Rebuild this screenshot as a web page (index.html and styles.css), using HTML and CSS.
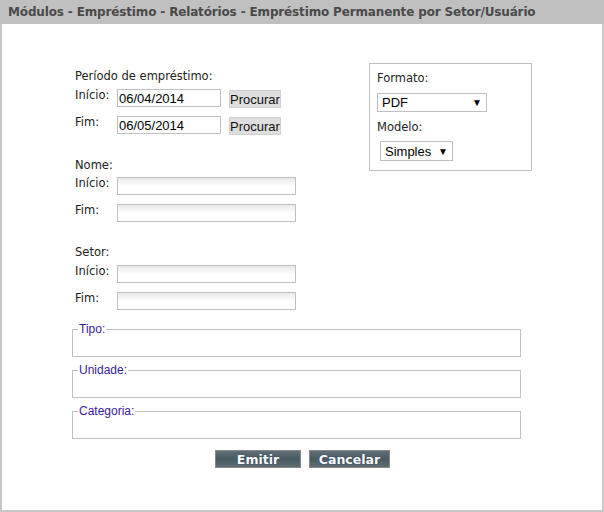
FILE: index.html
```html
<!DOCTYPE html>
<html lang="pt-BR">
    <head>
        <meta charset="UTF-8" />
        <title>Empréstimo Permanente por Setor/Usuário</title>
        <link rel="stylesheet" href="styles.css">
    </head>
    <body>
        <div class="frame">
            <div class="header">Módulos - Empréstimo - Relatórios - Empréstimo Permanente por Setor/Usuário</div>
            <div class="content">
                <div class="top">
                    <div class="filters">
                        <div class="group-title">Período de empréstimo:</div>
                        <div class="row">
                            <label>Início:</label>
                            <input type="text" class="date" value="06/04/2014" />
                            <button class="find">Procurar</button>
                        </div>
                        <div class="row">
                            <label>Fim:</label>
                            <input type="text" class="date" value="06/05/2014" />
                            <button class="find">Procurar</button>
                        </div>

                        <div class="group-title spaced">Nome:</div>
                        <div class="row">
                            <label>Início:</label>
                            <input type="text" class="text" />
                        </div>
                        <div class="row">
                            <label>Fim:</label>
                            <input type="text" class="text" />
                        </div>

                        <div class="group-title spaced-lg">Setor:</div>
                        <div class="row">
                            <label>Início:</label>
                            <input type="text" class="text" />
                        </div>
                        <div class="row">
                            <label>Fim:</label>
                            <input type="text" class="text" />
                        </div>
                    </div>
                    <div class="options">
                        <div class="opt-label">Formato:</div>
                        <div class="select select-wide"><span>PDF</span><span class="arrow">▼</span></div>
                        <div class="opt-label">Modelo:</div>
                        <div class="select select-small"><span>Simples</span><span class="arrow">▼</span></div>
                    </div>
                </div>

                <fieldset><legend>Tipo:</legend></fieldset>
                <fieldset><legend>Unidade:</legend></fieldset>
                <fieldset><legend>Categoria:</legend></fieldset>

                <div class="actions">
                    <button class="action btn-emitir">Emitir</button>
                    <button class="action btn-cancelar">Cancelar</button>
                </div>
            </div>
        </div>
    </body>
</html>
```

FILE: styles.css
```css
body {
    margin: 0;
    font-family: 'DejaVu Sans', Verdana, sans-serif;
    font-size: 11.5px;
    color: #222;
}
.frame {
    width: 604px;
    height: 512px;
    box-sizing: border-box;
    border: 2px solid #c8c8c8;
    border-top: none;
}
.header {
    height: 24px;
    line-height: 25px;
    margin: 0 -2px 0 -2px;
    padding-left: 8px;
    background-color: #c0c0c0;
    color: #4a4a4a;
    font-family: 'DejaVu Sans', Verdana, sans-serif;
    font-weight: bold;
    font-size: 12px;
    letter-spacing: -0.15px;
}
.content {
    padding-top: 39px;
}
.top {
    display: flex;
    align-items: flex-start;
}
.filters {
    width: 294px;
    padding-left: 73px;
    padding-top: 7px;
}
.group-title {
    line-height: 13px;
    margin-bottom: 6px;
}
.group-title.spaced {
    margin-top: 25px;
    margin-bottom: 5px;
}
.group-title.spaced-lg {
    margin-top: 24px;
}
.row {
    display: flex;
    align-items: flex-start;
    height: 18px;
    margin-bottom: 9px;
}
.row label {
    width: 42px;
    line-height: 13px;
}
input {
    height: 18px;
    box-sizing: border-box;
    border: 1px solid #c0c0c0;
    margin: 0;
    padding: 0 1px;
    font-family: 'Liberation Sans', Arial, sans-serif;
    font-size: 13px;
    color: #000;
}
input.date {
    width: 104px;
}
input.text {
    width: 179px;
    background: linear-gradient(#e8e8e8, #ffffff 50%);
}
button.find {
    margin: 1px 0 0 8px;
    height: 18px;
    width: 52px;
    padding: 0;
    border: 1px solid #d0d0d0;
    background-color: #dedede;
    font-family: 'Liberation Sans', Arial, sans-serif;
    font-size: 13px;
    color: #111;
}
.options {
    width: 163px;
    height: 108px;
    box-sizing: border-box;
    border: 1px solid #c0c0c0;
    padding: 8px 0 0 7px;
}
.opt-label {
    line-height: 13px;
    margin-bottom: 8px;
}
.select {
    display: flex;
    align-items: center;
    justify-content: space-between;
    height: 19px;
    box-sizing: border-box;
    border: 1px solid #c0c0c0;
    padding: 0 4px 0 4px;
    font-family: 'Liberation Sans', Arial, sans-serif;
    font-size: 13px;
    color: #000;
    margin-bottom: 9px;
}
.select .arrow {
    font-size: 10px;
}
.select-wide {
    width: 110px;
}
.select-small {
    width: 73px;
    height: 20px;
    margin-top: -1px;
    margin-left: 3px;
}
fieldset {
    width: 449px;
    height: 34px;
    box-sizing: border-box;
    margin: 0 0 7px 70px;
    padding: 0 6px;
    border: 1px solid #c0c0c0;
}
fieldset:first-of-type {
    margin-top: 4px;
}
legend {
    padding: 0 1px;
    margin-left: -1px;
    font-family: 'Liberation Sans', Arial, sans-serif;
    font-size: 12px;
    color: #3a1aa0;
    line-height: 13px;
}
.actions {
    display: flex;
    justify-content: center;
    gap: 8px;
    margin-top: 11px;
    padding-left: 1px;
}
.action {
    height: 18px;
    padding: 0;
    border: 1px solid #888;
    background: linear-gradient(#607078, #4a5a61 50%, #5e6e75);
    color: #fff;
    font-family: 'DejaVu Sans', Verdana, sans-serif;
    font-weight: bold;
    font-size: 12.5px;
    text-shadow: 0 0 1px #1c2c60;
}
.btn-emitir {
    width: 86px;
}
.btn-cancelar {
    width: 81px;
}
```
